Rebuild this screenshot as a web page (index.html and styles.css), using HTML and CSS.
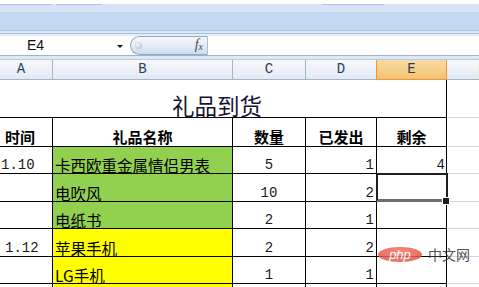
FILE: index.html
```html
<!DOCTYPE html>
<html lang="zh">
<head>
<meta charset="utf-8">
<title>礼品到货</title>
<link rel="stylesheet" href="styles.css">
</head>
<body>
<div class="app">
  <div class="ribbon">
    <div class="rb-white"></div>
    <div class="rb-tabs"><span class="tab t1"></span><span class="tab t2"></span><span class="tab t3"></span></div>
    <div class="rb-body"></div>
    <div class="rb-edge"><div class="l1"></div><div class="l2"></div><div class="l3"></div><div class="l4"></div></div>
  </div>
  <div class="formula">
    <div class="namebox"><span class="name">E4</span><span class="arrow"></span></div>
    <div class="fxpill"><span class="dot"></span><span class="fx">f<sub>x</sub></span></div>
    <div class="finput"></div>
  </div>
  <div class="fsep"></div>
  <div class="sheet">
    <div class="ch ca">A</div>
    <div class="ch">B</div>
    <div class="ch">C</div>
    <div class="ch">D</div>
    <div class="ch che">E</div>
    <div class="ch chf">F</div>

    <div class="title">礼品到货</div>
    <div class="gf"></div>

    <div class="c ta hd">时间</div>
    <div class="c hd">礼品名称</div>
    <div class="c hd">数量</div>
    <div class="c hd">已发出</div>
    <div class="c hd">剩余</div>
    <div class="gf"></div>

    <div class="c ta num t1">1.10</div>
    <div class="c nm green"><span class="u">卡西欧重金属情侣男表</span></div>
    <div class="c num ctr">5</div>
    <div class="c num rt">1</div>
    <div class="c num rt re">4</div>
    <div class="gf"></div>

    <div class="c ta"></div>
    <div class="c nm green"><span class="u">电吹风</span></div>
    <div class="c num ctr">10</div>
    <div class="c num rt">2</div>
    <div class="c sel"></div>
    <div class="gf"></div>

    <div class="c ta"></div>
    <div class="c nm green"><span class="u">电纸书</span></div>
    <div class="c num ctr">2</div>
    <div class="c num rt">1</div>
    <div class="c"></div>
    <div class="gf"></div>

    <div class="c ta num t2">1.12</div>
    <div class="c nm yellow"><span class="u">苹果手机</span></div>
    <div class="c num ctr">2</div>
    <div class="c num rt">2</div>
    <div class="c"></div>
    <div class="gf"></div>

    <div class="c ta"></div>
    <div class="c nm yellow"><span class="u">LG手机</span></div>
    <div class="c num ctr">1</div>
    <div class="c num rt">1</div>
    <div class="c"></div>
    <div class="gf"></div>

    <div class="c ta"></div>
    <div class="c yellow"></div>
    <div class="c"></div>
    <div class="c"></div>
    <div class="c"></div>
    <div class="gf"></div>
  </div>
  <div class="watermark"><span class="php">php</span><span class="cn">中文网</span></div>
</div>
</body>
</html>
```

FILE: styles.css
```css
* { box-sizing: border-box; }
html, body { margin: 0; padding: 0; background: #fff; }
body { width: 479px; height: 287px; overflow: hidden; font-family: "Noto Sans CJK SC", "Noto Sans", sans-serif; }
.app { position: relative; width: 479px; height: 287px; overflow: hidden; }

.ribbon { display: flex; flex-direction: column; height: 36px; }
.rb-white { height: 4px; background: #fff; }
.rb-tabs { height: 8px; background: #d6e4f5; display: flex; align-items: flex-start; }
.tab { height: 1px; background: #a9c1e2; }
.tab.t1 { width: 52px; }
.tab.t2 { width: 46px; margin-left: 4px; }
.tab.t3 { width: 62px; margin-left: 220px; }
.rb-body { height: 18px; background: #c3d9f1; }
.rb-edge { height: 6px; display: flex; flex-direction: column; }
.rb-edge .l1 { height: 1px; background: #a9c0de; }
.rb-edge .l2 { height: 2px; background: #dde8f5; }
.rb-edge .l3 { height: 1px; background: #a7bfdf; }
.rb-edge .l4 { height: 2px; background: #e6eef8; }

.formula { display: flex; height: 19px; background: #fff; }
.namebox { width: 130px; display: flex; align-items: center; position: relative; }
.name { font-family: "Liberation Sans", Arial, sans-serif; font-size: 14px; margin-left: 27px; color: #111; line-height: 19px; }
.arrow { position: absolute; left: 117px; top: 9px; width: 0; height: 0; border-left: 3px solid transparent; border-right: 3px solid transparent; border-top: 3px solid #111; }
.fxpill { width: 78px; height: 19px; border: 1px solid #8fa8c8; border-right: 1px solid #a8bcd6; border-radius: 10px 0 0 10px; background: linear-gradient(#f5f8fc, #e2ebf6 55%, #ccdcef); display: flex; align-items: center; justify-content: space-between; padding: 0 4px 0 4px; }
.dot { width: 7px; height: 7px; border-radius: 50%; background: radial-gradient(circle at 40% 40%, #fafafa, #a9b3bf); }
.fx { font-family: "Liberation Serif", serif; font-style: italic; font-size: 14px; color: #4a4a4a; line-height: 14px; }
.fx sub { font-size: 10px; vertical-align: -1px; }
.finput { flex: 1; background: #fff; }

.fsep { height: 5px; background: #dfe8f3; border-top: 1px solid #9db3cf; border-bottom: 1px solid #b8c9dd; }

.sheet { display: grid; grid-template-columns: 53px 180px 73px 71px 70px 1fr; grid-template-rows: 20px 38px 29px 27px 28px 27px 28px 27px 27px; }

.ch { background: linear-gradient(#f7f9fc, #e3e9f2); border-right: 1px solid #9eb6ce; border-bottom: 1px solid #9eb6ce; font-family: "Liberation Mono", monospace; font-size: 14px; color: #2a3f5c; display: flex; align-items: center; justify-content: center; line-height: 19px; }
.ch.ca { padding-right: 10px; }
.ch.che { background: linear-gradient(#f9dca4, #f3c270); border-left: 1px solid #f29536; border-right: 1px solid #f29536; border-bottom: 1px solid #f29536; margin-left: -1px; }
.ch.chf { border-right: none; justify-content: flex-start; padding-left: 31px; overflow: hidden; }

.title { grid-column: 1 / 6; border-right: 1px solid #000; border-bottom: 1px solid #000; display: flex; align-items: flex-end; justify-content: center; font-size: 22.5px; line-height: 24px; color: #141432; padding-right: 12px; padding-bottom: 0px; }
.gf { border-bottom: 1px solid #d0d7e5; }

.c { border-right: 1px solid #000; border-bottom: 1px solid #000; display: flex; align-items: flex-end; position: relative; color: #000; }
.hd { font-weight: bold; font-size: 15px; line-height: 17px; justify-content: center; padding-bottom: 1px; }
.ta { justify-content: center; padding-right: 12px; }
.num { font-family: "Liberation Mono", monospace; font-size: 14px; line-height: 14px; padding-bottom: 1px; color: #1a1a1a; }
.ta.t1 { justify-content: flex-start; padding-left: 1px; padding-right: 0; }
.ta.t2 { justify-content: flex-start; padding-left: 5px; padding-right: 0; }
.ctr { justify-content: center; }
.rt { justify-content: flex-end; padding-right: 2px; }
.rt.re { padding-right: 1px; }
.nm { font-size: 15.5px; line-height: 16px; padding-left: 2px; padding-bottom: 0; }
.u { text-decoration: underline; text-underline-offset: 1px; text-decoration-thickness: 1px; }
.green { background: #92d050; }
.yellow { background: #ffff00; }

.sel::after { content: ""; position: absolute; top: -1px; left: -1px; right: -2px; bottom: -1px; border: 2px solid #1e1e1e; border-bottom: 3px solid #6e6e6e; }
.sel::before { content: ""; position: absolute; right: -4px; bottom: -4px; width: 6px; height: 6px; background: #1e1e1e; border: 1px solid #fff; z-index: 2; }

.watermark { position: absolute; left: 378px; top: 247px; display: flex; align-items: center; gap: 6px; opacity: 0.85; }
.php { width: 44px; height: 15px; border-radius: 50%; background: radial-gradient(ellipse at 50% 35%, #f27a6a, #e0473a); color: #fff; font-family: "Liberation Sans", Arial, sans-serif; font-style: italic; font-size: 13px; line-height: 15px; text-align: center; }
.cn { font-size: 14px; line-height: 15px; color: #333; }
```
